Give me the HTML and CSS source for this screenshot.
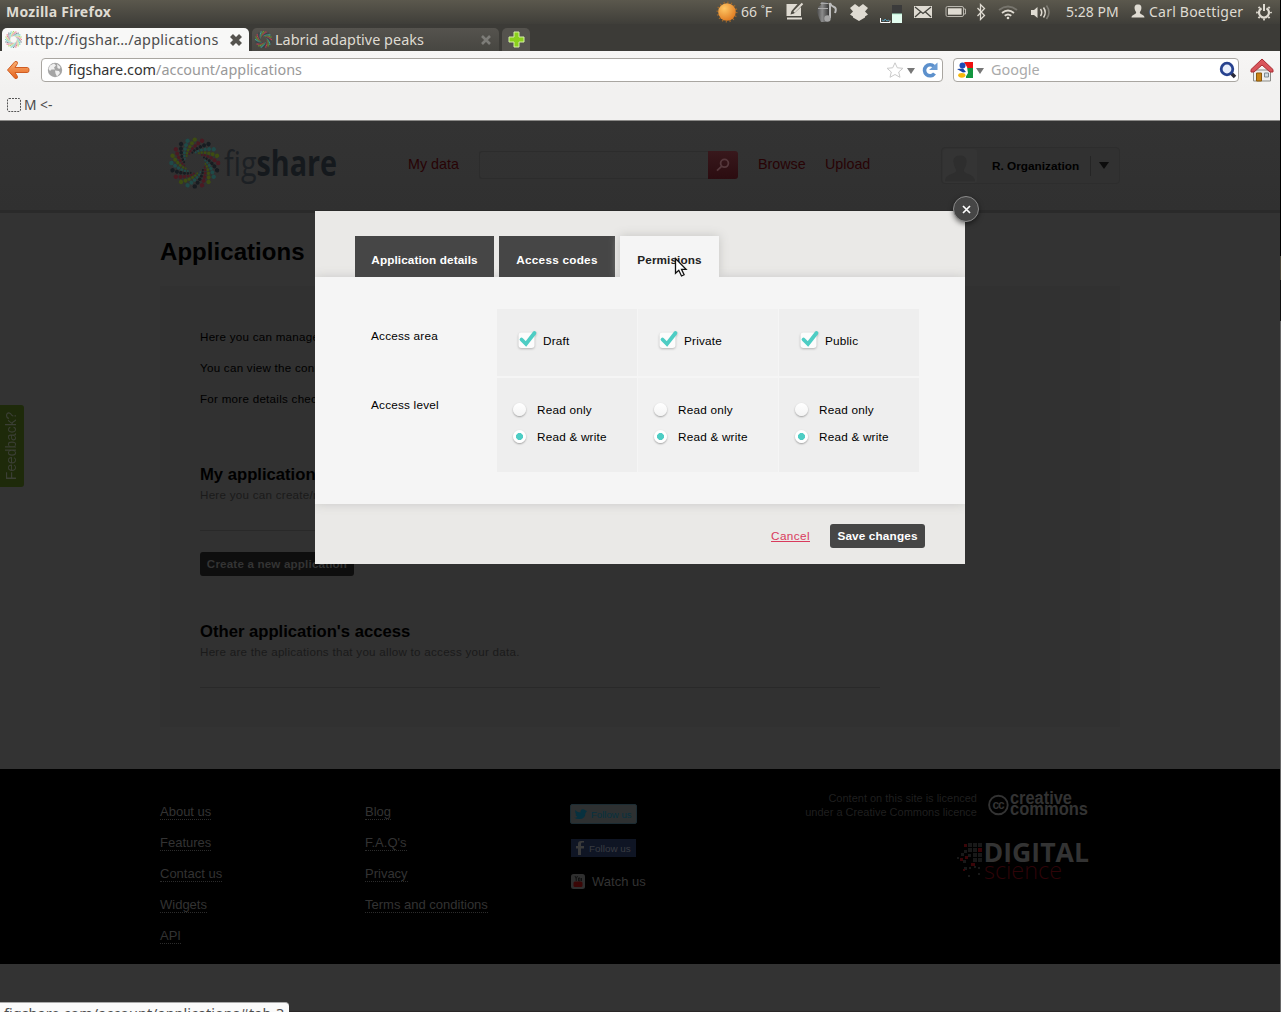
FILE: index.html
```html
<!DOCTYPE html>
<html lang="en">
<head>
<meta charset="utf-8">
<title>Applications</title>
<link rel="stylesheet" href="styles.css">
</head>
<body>
<svg class="defs" width="0" height="0">
  <defs>
    <g id="arm">
      <circle cx="0" cy="-23.4" r="2.2"/><circle cx="-2.8" cy="-19.7" r="2"/><circle cx="-4.9" cy="-16.3" r="1.75"/><circle cx="-6.6" cy="-13" r="1.5"/><circle cx="-7.7" cy="-9.8" r="1.25"/><circle cx="-8.1" cy="-7" r="1"/>
    </g>
    <g id="quad">
      <use href="#arm" class="c-green"/><use href="#arm" class="c-red" transform="rotate(18)"/><use href="#arm" class="c-navy" transform="rotate(36)"/><use href="#arm" class="c-teal" transform="rotate(54)"/>
    </g>
    <g id="swirl">
      <use href="#quad"/><use href="#quad" transform="rotate(72)"/><use href="#quad" transform="rotate(144)"/><use href="#quad" transform="rotate(216)"/><use href="#quad" transform="rotate(288)"/>
    </g>
    <linearGradient id="orange" x1="0" y1="0" x2="0" y2="1"><stop offset="0" stop-color="#fbb072"/><stop offset="1" stop-color="#e4601a"/></linearGradient>
    <radialGradient id="sun" cx=".35" cy=".3" r=".8"><stop offset="0" stop-color="#ffc765"/><stop offset="1" stop-color="#dd751c"/></radialGradient>
    <linearGradient id="metal" x1="0" y1="0" x2="1" y2="0"><stop offset="0" stop-color="#4a4a4a"/><stop offset=".4" stop-color="#8c8c8c"/><stop offset="1" stop-color="#2c2c2c"/></linearGradient>
  </defs>
</svg>
<div class="screen">
  <div class="panel">
    <span class="panel-title">Mozilla Firefox</span>
    <div class="tray">
      <svg width="22" height="24" viewBox="0 0 22 24"><circle cx="11" cy="12" r="9.6" fill="none" stroke="#a0692b" stroke-width="1.8" stroke-dasharray="1.2 2.57"/><circle cx="11" cy="12" r="8.8" fill="url(#sun)"/></svg>
      <span class="t-temp">66 ˚F</span>
      <svg width="20" height="24" viewBox="0 0 20 24"><path d="M1.500 4h11l-6 7-1 3.500 3.500-1 7-6.500v9h-14.500z" fill="#dfdbd2"/><path d="M17.500 3.500L9 12" stroke="#dfdbd2" stroke-width="2" fill="none"/><path d="M2 18.500h15" stroke="#dfdbd2" stroke-width="2"/></svg>
      <svg width="22" height="24" viewBox="0 0 22 24"><path d="M5 2h7v3l2 1v12l-2 4H5l-2-4-2-6 1-5 3-2z" fill="url(#metal)"/><path d="M2 8.500h10M4.500 3.500h8" stroke="#aaa"/><path d="M14 18V3q1 3 4 4t1 6" fill="none" stroke="#bdbdbd" stroke-width="2"/><circle cx="11.500" cy="18.500" r="3.200" fill="#a5a5a5"/></svg>
      <svg width="20" height="24" viewBox="0 0 20 24"><path d="M6 4l4 3 4-3 5 4-3 3.500 3 3-3 2v1l-6 3.500-6-3.500v-1l-3-2 3-3L1 8z" fill="#dfdbd2"/></svg>
      <svg width="24" height="24" viewBox="0 0 24 24"><path d="M.5 18v4.500H10v-2" stroke="#fff" fill="none"/><path d="M2 20l2 1 1-2 2 2 2-1" stroke="#579bb5" fill="none"/><path d="M12 5h10v9H12z" fill="#3b3b3b"/><path d="M12 14h10v9H12z" fill="#e3fdf0"/><path d="M12 14h10" stroke="#b5f0d2"/></svg>
      <svg width="20" height="24" viewBox="0 0 20 24"><rect x="1" y="6" width="18" height="12" fill="#dfdbd2"/><path d="M2 7l8 6.500L18 7M2 17l5.500-5M18 17l-5.500-5" stroke="#44433d" fill="none" stroke-width="1.300"/></svg>
      <svg width="22" height="24" viewBox="0 0 22 24"><rect x="1" y="6.500" width="17.500" height="10" rx="1.500" fill="none" stroke="#b9b6ae"/><rect x="3" y="8.300" width="13.600" height="6.400" fill="#dfdbd2"/><path d="M19 9h1.500v5H19" stroke="#b9b6ae" fill="none"/></svg>
      <svg width="12" height="24" viewBox="0 0 12 24"><path d="M1.500 8l7 7.500-4 4V4.500l4 4-7 7.500" fill="none" stroke="#dfdbd2" stroke-width="1.300"/></svg>
      <svg width="21" height="24" viewBox="0 0 21 24" fill="none" stroke-width="1.800"><path d="M1 10q9-7 18 0" stroke="#77756d"/><path d="M4 13q6-5 12 0M6.700 15.800q3.300-2.600 6.600 0" stroke="#dfdbd2"/><circle cx="10" cy="18" r="1.300" fill="#dfdbd2"/></svg>
      <svg width="22" height="24" viewBox="0 0 22 24" fill="none" stroke-width="1.500"><path d="M1 10h3l3.500-3v11L4 15H1z" fill="#dfdbd2"/><path d="M10.500 9q2.500 3.500 0 7M13.500 7.500q3.500 5 0 10" stroke="#dfdbd2"/><path d="M16.500 5.500q5 7 0 13.500" stroke="#807e76"/></svg>
      <span class="t-time">5:28 PM</span>
      <svg width="14" height="24" viewBox="0 0 14 24"><path d="M7 4.500c3 0 3.800 2 3.300 4.500-.3 1.700-1.200 2.700-1.500 3.500.2 2 4.700 2 4.700 5H.5c0-3 4.500-3 4.700-5C4.900 11.700 4 10.700 3.700 9 3.200 6.500 4 4.500 7 4.500z" fill="#dfdbd2"/></svg>
      <span class="t-user">Carl Boettiger</span>
      <svg width="17" height="24" viewBox="0 0 17 24" fill="none" stroke="#dfdbd2"><path d="M5.500 8.200a5 5 0 1 0 5 0" stroke-width="2.200"/><path d="M8 4v7" stroke-width="2"/><circle cx="8" cy="12.500" r="7" stroke-width="1.800" stroke-dasharray="1.800 3.698" stroke-dashoffset="1"/></svg>
    </div>
  </div>

  <div class="tabstrip">
    <div class="tab tab-on">
      <svg class="bright" width="17" height="17" viewBox="-25.500 -25.500 51 51"><use href="#swirl"/></svg>
      <span class="tt1">http://figshar…/applications</span>
      <svg class="tab-x" width="14" height="14" viewBox="0 0 14 14"><path d="M2.500 2.500l9 9M11.500 2.500l-9 9" stroke="#55534e" stroke-width="4.200"/></svg>
    </div>
    <div class="tab tab-off">
      <svg class="mid" width="17" height="17" viewBox="-25.500 -25.500 51 51"><use href="#swirl"/></svg>
      <span class="tt2">Labrid adaptive peaks</span>
      <svg class="tab-x" width="14" height="14" viewBox="0 0 14 14"><path d="M3 3l8 8M11 3l-8 8" stroke="#7d7c78" stroke-width="2.600"/></svg>
    </div>
    <div class="tab-new"><svg width="17" height="17" viewBox="0 0 17 17"><path d="M6 1h5v5h5v5h-5v5H6v-5H1V6h5z" fill="#8bd01c" stroke="#d7f0a6"/></svg></div>
  </div>

  <div class="navbar">
    <svg class="back" width="24" height="20" viewBox="0 0 24 20"><path d="M1.500 10L9 1.500q3-.5 2.500 2L9 7.500h12.500q1.500 0 1.500 2.500t-1.500 2.500H9l2.500 4q.5 2.500-2.500 2z" fill="url(#orange)" stroke="#cf5c22"/></svg>
    <div class="urlbar">
      <svg width="16" height="16" viewBox="0 0 16 16"><circle cx="8" cy="8" r="7.200" fill="#a5a5a5"/><path d="M3 3.500l4-2 2 2-2 2 1 2H4.500L3 9 1.500 7zM10 2l3.500 3-1 2-2-1zM8 8.500l4 .5 1 2-3 3.500-1.500-3z" fill="#f0f0f0"/></svg>
      <span class="url"><b>figshare.com</b>/account/applications</span>
      <svg class="star" width="18" height="16" viewBox="0 0 18 16"><path d="M9 .8l2.300 5 5.600.5-4.200 3.700 1.300 5.300L9 12.500l-5 2.800L5.300 10 1.100 6.300l5.600-.5z" fill="#fff" stroke="#c9c9c9"/></svg>
      <svg class="caret" width="8" height="6" viewBox="0 0 8 6"><path d="M0 0h8L4 6z" fill="#777"/></svg>
      <svg width="17" height="17" viewBox="0 0 17 17"><path d="M13 4.500A5.500 5.500 0 1 0 13.500 11.500" fill="none" stroke="#5c90cc" stroke-width="3.600"/><path d="M8 8h8.500V.5z" fill="#6c9dd4"/></svg>
    </div>
    <div class="searchbar">
      <svg width="16" height="16" viewBox="0 0 16 16"><path d="M7 0h9v6H7z" fill="#e11"/><path d="M8 6h8v10H9z" fill="#12963f"/><path d="M0 0h7l3 5 1 6-3 5H0z" fill="#fff"/><circle cx="5.500" cy="3.500" r="3" fill="#1d4ab5"/><path d="M0 7l6-.5 3 3.500-3 .5z" fill="#1743a5"/><ellipse cx="4.800" cy="13.300" rx="3.600" ry="2.400" fill="#f6b80c"/></svg>
      <svg class="caret" width="8" height="6" viewBox="0 0 8 6"><path d="M0 0h8L4 6z" fill="#777"/></svg>
      <span class="ph">Google</span>
      <svg width="18" height="18" viewBox="0 0 18 18"><path d="M12 12l4 4" stroke="#2a2a38" stroke-width="3.600"/><circle cx="8" cy="8" r="5.800" fill="#e8eefb" stroke="#27428f" stroke-width="2.800"/></svg>
    </div>
    <svg class="home" width="24" height="24" viewBox="0 0 24 24"><path d="M3.500 12h17v11h-17z" fill="#eee" stroke="#8b8b86"/><path d="M6.500 15h5v8h-5z" fill="#c98314" stroke="#8c5a0c"/><path d="M14.500 15h4v4h-4z" fill="#cfdbe3" stroke="#7e8a90"/><path d="M12 1L1 11.500V14h3l8-7 8 7h3v-2.500z" fill="#d9545a" stroke="#a92d33"/></svg>
  </div>

  <div class="bookmarks">
    <svg width="14" height="14" viewBox="0 0 14 14"><rect x=".5" y=".5" width="13" height="13" rx="1.500" fill="none" stroke="#555" stroke-dasharray="2 1"/></svg>
    <span>M &lt;-</span>
  </div>

  <div class="page">
    <header class="site-head">
      <svg class="logo dim" width="180" height="56" viewBox="0 0 180 56">
        <g transform="translate(34.800 28)"><use href="#swirl"/></g>
        <text class="lg" x="64" y="41" textLength="113" lengthAdjust="spacingAndGlyphs">fig<tspan>share</tspan></text>
      </svg>
      <a class="nav n1">My data</a>
      <div class="search"><i></i><span><svg width="14" height="14" viewBox="0 0 14 14" fill="none" stroke="#55383c" stroke-width="1.800"><circle cx="8.500" cy="5.300" r="3.900"/><path d="M5.800 8.200L1 12.600"/></svg></span></div>
      <a class="nav n2">Browse</a>
      <a class="nav n3">Upload</a>
      <div class="user">
        <svg width="34" height="34" viewBox="0 0 34 34"><rect width="34" height="34" rx="3" fill="#343434"/><path d="M17 6.500c5 0 7 3 6.500 7s-2 6-2.800 8c.3 4 11.300 3 11.300 11H2c0-8 11-7 11.300-11-.8-2-2.300-4-2.800-8s1.500-7 6.500-7z" fill="#2e2e2e"/></svg>
        <b>R. Organization</b>
        <span><svg width="10" height="7" viewBox="0 0 10 7"><path d="M0 0h10L5 7z" fill="#0c0c0c"/></svg></span>
      </div>
    </header>
    <main>
      <h1>Applications</h1>
      <section class="card">
        <p>Here you can manage your applications.</p>
        <p>You can view the connected ones.</p>
        <p>For more details check the docs.</p>
        <h2 class="h-my">My applications</h2>
        <div class="sub">Here you can create/remove applications.</div>
        <hr>
        <a class="create">Create a new application</a>
        <h2 class="h-other">Other application's access</h2>
        <div class="sub">Here are the aplications that you allow to access your data.</div>
        <hr>
      </section>
    </main>
    <footer>
      <ul><li><a>About us</a></li><li><a>Features</a></li><li><a>Contact us</a></li><li><a>Widgets</a></li><li><a>API</a></li></ul>
      <ul><li><a>Blog</a></li><li><a>F.A.Q's</a></li><li><a>Privacy</a></li><li><a>Terms and conditions</a></li></ul>
      <div class="social">
        <div class="tw"><svg width="13" height="11" viewBox="0 0 13 11"><path d="M0 8.500q2 .5 3.500-.8Q1.500 7 1.500 5.500l1 0Q.8 4 1.200 1 3.500 3.500 6.500 3.500 6.500 0 9 .3q1.500 0 2 1L13 2l-1.500 2Q11 10 5.500 10 2 10 0 8.500z" fill="#07313f"/></svg>Follow us</div>
        <div class="fb"><svg width="8" height="14" viewBox="0 0 8 14"><path d="M8 1.500H6Q5 1.500 5 3v2h3v2.500H5V14H2V7.500H0V5h2V3Q2 0 5 0h3z" fill="#3a3a3a"/></svg>Follow us</div>
        <div class="yt"><svg width="14" height="15" viewBox="0 0 14 15"><rect width="14" height="15" rx="2.500" fill="#2f2f2f"/><path d="M4 2l1.200 2.500V7M6.500 2L5.200 4.500M7.500 4v3h1.500V4zM10.500 4v3" stroke="#111" fill="none"/><rect x="2.500" y="7.500" width="9" height="5.500" rx="1.500" fill="#3a0606"/></svg>Watch us</div>
      </div>
      <div class="credits">
        <div class="cc">
          <p>Content on this site is licenced<br>under a Creative Commons licence</p>
          <svg width="102" height="28" viewBox="0 0 102 28"><circle cx="10.400" cy="14" r="9.300" fill="none" stroke="#333" stroke-width="1.900"/><text class="cc-c" x="4.400" y="17.600" textLength="12.200">cc</text><text class="cc-t" x="22" y="12.800" textLength="62" lengthAdjust="spacingAndGlyphs">creative</text><text class="cc-t" x="22" y="24" textLength="78" lengthAdjust="spacingAndGlyphs">commons</text></svg>
        </div>
        <svg class="ds" width="134" height="42" viewBox="0 0 134 42">
          <g fill="#181818"><path d="M12 2h4v4h-4zM17 2h4v4h-4zM22 2h4v4h-4zM12 7h4v4h-4zM17 7h4v4h-4zM17 12h4v4h-4zM22 12h4v4h-4zM17 17h4v4h-4zM22 17h4v4h-4zM12 13h3v3h-3zM8 9h3v3H8zM5 12h3v3H5zM1 16h2v2H1zM7 19h3v3H7zM8 26h3v3H8zM13 26h2v2h-2zM18 25h2v2h-2zM22 26h2v2h-2zM12 34h2v2h-2zM22 32h2v2h-2z"/></g>
          <path d="M8 3h3v3H8zM22 7h4v4h-4zM4 17h3v3H4zM9 15h3v3H9zM15 22h4v3h-4zM7 28h2v2H7z" fill="#3a0508"/>
          <text class="ds-d" x="27.500" y="21" textLength="105.500" lengthAdjust="spacingAndGlyphs">DIGITAL</text>
          <text class="ds-s" x="28" y="37.500" textLength="78" lengthAdjust="spacingAndGlyphs">science</text>
        </svg>
      </div>
    </footer>
    <div class="feedback"><span>Feedback?</span></div>
  </div>

  <div class="modal">
    <div class="m-tabs"><a>Application details</a><a>Access codes</a><a class="on">Permisions</a></div>
    <div class="m-body">
      <div class="lab">Access area</div>
      <div class="cell area"><svg class="chk" width="22" height="22" viewBox="0 0 22 22"><use href="#check"/></svg>Draft</div>
      <div class="cell area alt"><svg class="chk" width="22" height="22" viewBox="0 0 22 22"><use href="#check"/></svg>Private</div>
      <div class="cell area"><svg class="chk" width="22" height="22" viewBox="0 0 22 22"><use href="#check"/></svg>Public</div>
      <div class="lab">Access level</div>
      <div class="cell level"><label><i></i>Read only</label><label><i class="sel"></i>Read &amp; write</label></div>
      <div class="cell level alt"><label><i></i>Read only</label><label><i class="sel"></i>Read &amp; write</label></div>
      <div class="cell level"><label><i></i>Read only</label><label><i class="sel"></i>Read &amp; write</label></div>
    </div>
    <div class="m-foot"><a class="cancel">Cancel</a><a class="save">Save changes</a></div>
    <div class="close"><svg width="9" height="9" viewBox="0 0 9 9"><path d="M1 1l7 7M8 1L1 8" stroke="#fff" stroke-width="1.700"/></svg></div>
  </div>
  <svg class="defs" width="0" height="0"><defs><g id="check"><rect x="1.500" y="3.500" width="16" height="15.500" rx="3" fill="#fcfcfc"/><path d="M4.500 10.500l4.500 4.500L17.500 4" fill="none" stroke="#4ecdc4" stroke-width="3.800" stroke-linecap="round"/></g></defs></svg>
  <svg class="pointer" width="16" height="22" viewBox="0 0 16 22"><path d="M1.500 1.500v14.800l3.300-3 2.700 5.700 2.600-1.200-2.600-5.400h4.600z" fill="#fff" stroke="#111" stroke-width="1.300"/></svg>
  <div class="status">figshare.com/account/applications#tab-3</div>
</div>
</body>
</html>
```
FILE: styles.css
```css
* { box-sizing: border-box; }
body {
  margin: 0;
  height: 1012px;
  overflow: hidden;
  background: linear-gradient(#000 0 256px, #4a4539 256px 280px, #111 280px 321px, #666 321px);
  font-family: "Liberation Sans", Arial, sans-serif;
}
svg { display: block; flex: none; }
.defs { position: absolute; }
.screen {
  position: relative;
  width: 1280px;
  height: 1012px;
  overflow: hidden;
  background: #333;
}

/* desktop panel */
.panel {
  display: flex;
  justify-content: space-between;
  height: 24px;
  padding: 0 7px 0 6px;
  background: linear-gradient(#5b584d, #3f3e39);
  color: #dfdbd2;
  font: 14px/24px "Noto Sans", sans-serif;
  white-space: nowrap;
}
.panel-title { font-weight: 700; letter-spacing: .25px; }
.t-user { letter-spacing: .22px; }
.tray {
  display: grid;
  grid-template-columns: 25px 44px 31px 33px 31px 33px 32px 31px 22px 32px 36px 65px 18px 107px 17px;
}

/* tabs */
.tabstrip {
  display: flex;
  gap: 3px;
  height: 27px;
  padding: 4px 0 0 2px;
  background: #3c3b37;
  font: 14.4px/23px "Noto Sans", sans-serif;
  white-space: nowrap;
}
.tab {
  display: flex;
  align-items: center;
  width: 247px;
  padding: 0 6px 0 3px;
  border-radius: 5px 5px 0 0;
}
.tab span { margin-left: 3px; }
.tt1 { letter-spacing: .27px; }
.tt2 { letter-spacing: .03px; }
.tab-x { margin-left: auto; }
.tab-on { background: #f8f8f7; color: #4c4c4c; }
.tab-off { background: linear-gradient(#55534e, #474641); color: #dfdbd2; }
.tab-new {
  display: flex;
  align-items: center;
  justify-content: center;
  width: 28px;
  border-radius: 5px 5px 0 0;
  background: #55534e;
}
.bright { --g: #b5d76b; --r: #e87c8c; --n: #7b8a96; --t: #6fd0c8; }
.mid { --g: #6f9b2b; --r: #c43c51; --n: #33414d; --t: #37a89f; }
.dim { --g: #3d4c12; --r: #4a1a22; --n: #171c21; --t: #1f4a48; }
.c-green { fill: var(--g); }
.c-red { fill: var(--r); }
.c-navy { fill: var(--n); }
.c-teal { fill: var(--t); }

/* navigation */
.navbar {
  display: flex;
  align-items: center;
  height: 38px;
  padding: 0 6px;
  background: linear-gradient(#f7f6f5, #f2f1f0);
  font: 14.400px/22px "Noto Sans", sans-serif;
  white-space: nowrap;
}
.urlbar, .searchbar {
  display: flex;
  align-items: center;
  height: 24px;
  border: 1px solid #a9a6a1;
  border-radius: 4px;
  background: #fff;
}
.urlbar { width: 902px; margin-left: 11px; padding: 0 4px 0 5px; }
.url { margin-left: 5px; color: #999; }
.url b { font-weight: 400; color: #333; }
.star { margin-left: auto; }
.caret { margin: 2px 7px 0 3px; }
.star + .caret { margin: 2px 6px 0 3px; }
.searchbar { width: 286px; margin: 0 11px 0 10px; padding: 0 0 0 3px; }
.searchbar > :last-child { margin: 0 1px 0 auto; }
.ph { color: #aaa; }
.bookmarks {
  display: flex;
  align-items: center;
  gap: 3px;
  height: 32px;
  padding: 0 7px;
  background: #f2f1f0;
  border-bottom: 1px solid #8b8a88;
  color: #4c4c4c;
  font: 13.8px/30px "Noto Sans", sans-serif;
}

/* web page */
.page { position: relative; height: 891px; color: #000; border-bottom: 1px solid #2a2727; }
.site-head {
  display: flex;
  align-items: flex-start;
  height: 92px;
  padding: 0 160px;
  border-bottom: 3px solid #2a2a2a;
  background: linear-gradient(#333, #303030);
}
.logo { margin: 14px 0 0; }
.lg { font: 35px "Open Sans", sans-serif; fill: #1c2024; }
.lg tspan { font-weight: 700; fill: #15191d; }
.nav { margin-top: 33px; color: #280305; font-size: 14.300px; line-height: 20px; white-space: nowrap; }
.n1 { width: 71px; margin-left: 68px; }
.n2 { width: 67px; margin-left: 20px; }
.n3 { width: 46px; }
.search { display: flex; width: 259px; height: 28px; margin-top: 30px; }
.search i { flex: 1; border: 1px solid #2c2c2c; border-right: 0; border-radius: 3px 0 0 3px; }
.search span {
  display: flex;
  align-items: center;
  justify-content: center;
  width: 30px;
  border-radius: 0 3px 3px 0;
  background: linear-gradient(#38181c, #2b0c10);
}
.user {
  display: flex;
  align-items: center;
  width: 179px;
  height: 37px;
  margin: 26px 0 0 auto;
  padding: 1px;
  border: 1px solid #2d2d2d;
  border-radius: 4px;
  background: #313131;
}
.user b { margin-left: 15px; font-size: 11.8px; white-space: nowrap; }
.user span { display: flex; align-items: center; margin-left: auto; height: 20px; padding: 0 9px 0 8px; border-left: 1px solid #252525; }
main { height: 556px; padding: 23px 160px 0; }
h1 { margin: 0; font-size: 24px; line-height: 32px; letter-spacing: .05px; }
.card {
  width: 960px;
  height: 441px;
  margin-top: 18px;
  padding: 35px 40px 0;
  background: #313131;
}
.card p { margin: 0; height: 31px; font-size: 11.6px; line-height: 31px; letter-spacing: .27px; }
h2 { margin: 0; font-size: 16.65px; line-height: 24px; }
.h-my { margin-top: 49px; }
.sub { margin-top: -1px; font-size: 11.6px; line-height: 18px; letter-spacing: .27px; color: #1a1a1a; }
hr { width: 680px; height: 1px; margin: 26px 0 0; border: 0; background: #292929; }
.create {
  display: block;
  width: 154px;
  height: 24px;
  margin-top: 21px;
  border-radius: 3px;
  background: #0e0e0e;
  color: #343434;
  font: 700 11.6px/24px "Liberation Sans", sans-serif;
  letter-spacing: .18px;
  text-align: center;
}
.h-other { margin-top: 44px; }
footer {
  display: flex;
  height: 195px;
  padding: 0 160px;
  background: #000;
  color: #333;
  font-size: 13px;
}
footer ul { width: 205px; margin: 27px 0 0; padding: 0; list-style: none; }
footer li { height: 31px; line-height: 31px; }
footer li a { border-bottom: 1px dotted #2c2c2c; }
.social { width: 100px; padding-top: 35px; }
.social div { display: flex; align-items: center; }
.tw { width: 67px; height: 20px; padding-left: 3px; gap: 4px; background: #2d3031; color: #07313f; font-size: 9.6px; border-radius: 2px; border: 1px solid #1c2c33; }
.fb { width: 65px; height: 18px; margin: 15px 0 0 1px; padding-left: 5px; gap: 5px; background: #0f1524; color: #3a3c42; font-size: 9.9px; }
.yt { gap: 7px; margin: 17px 0 0 1px; height: 15px; }
.credits { display: flex; flex-direction: column; align-items: flex-end; margin-left: auto; padding: 22px 30px 0 0; }
.cc { display: flex; gap: 11px; }
.cc p { margin: 1px 0 0; font-size: 11px; line-height: 13.7px; text-align: right; color: #1f1f1f; }
.cc-c { font: 700 12px "Liberation Sans", sans-serif; fill: #333; }
.cc-t { font: 700 17.5px "Liberation Sans", sans-serif; fill: #333; }
.ds { margin-top: 22px; }
.ds-d { font: 700 26.5px "Open Sans", sans-serif; fill: #333; }
.ds-s { font: 300 23.500px "Open Sans", sans-serif; fill: #2e0408; }
.feedback {
  position: absolute;
  left: 0;
  top: 284px;
  width: 24px;
  height: 82px;
  border-radius: 0 3px 3px 0;
  background: #1e2a0a;
  color: #3b3f35;
}
.feedback span {
  display: block;
  width: 24px;
  height: 82px;
  writing-mode: vertical-rl;
  transform: rotate(180deg);
  font-size: 13.800px;
  line-height: 24px;
  text-align: center;
}

/* dialog */
.modal {
  position: absolute;
  left: 315px;
  top: 211px;
  width: 650px;
  height: 353px;
  background: #eae9e7;
  font-size: 11.75px;
  letter-spacing: .21px;
}
.m-tabs { position: relative; z-index: 1; display: flex; gap: 5px; height: 66px; padding: 25px 0 0 40px; letter-spacing: .1px; }
.m-tabs a {
  height: 41px;
  padding-top: 3px;
  width: 139px;
  background: #464646;
  color: #fff;
  font-weight: 700;
  line-height: 41px;
  text-align: center;
}
.m-tabs a:nth-child(2) { width: 116px; letter-spacing: .25px; }
.m-tabs .on {
  width: 99px;
  background: #f5f5f5;
  color: #222;
  box-shadow: 0 0 10px #c4c4c2;
  clip-path: inset(-12px -12px 0 -12px);
}
.m-body {
  display: grid;
  grid-template-columns: 125px 140px 140px 140px;
  grid-template-rows: 67px 94px;
  column-gap: 1px;
  row-gap: 2px;
  height: 227px;
  padding: 32px 0 0 56px;
  background: #f5f5f5;
  box-shadow: 0 0 10px #c8c8c6;
  clip-path: inset(-12px 0);
}
.m-body .lab { line-height: 18px; padding-top: 18px; }
.cell { background: #eee; }
.cell.alt { background: #f1f1f1; }
.area { display: flex; align-items: center; padding: 0 0 5px 20px; gap: 4px; }
.chk { filter: drop-shadow(0 1px 1px rgba(0, 0, 0, .25)); }
.level { padding-top: 18px; }
.level label { display: flex; align-items: center; height: 27px; padding-left: 16px; gap: 11px; }
.level i {
  display: flex;
  width: 13px;
  height: 13px;
  border-radius: 50%;
  background: linear-gradient(#fff, #f4f4f4);
  box-shadow: 0 1px 2px rgba(0, 0, 0, .35);
}
.level .sel { background: radial-gradient(circle, #4ecdc4 0 3.200px, #fff 3.800px); }
.m-foot { display: flex; justify-content: flex-end; gap: 20px; padding: 20px 40px 0 0; line-height: 24px; }
.cancel { color: #d93a5c; letter-spacing: .4px; text-decoration: underline; }
.save { width: 95px; height: 24px; border-radius: 3px; background: #464646; color: #fff; font-weight: 700; letter-spacing: .15px; text-align: center; }
.close {
  position: absolute;
  left: 638px;
  top: -15px;
  display: flex;
  align-items: center;
  justify-content: center;
  width: 26px;
  height: 26px;
  border: 1px solid #8c8c8c;
  border-radius: 50%;
  background: #464646;
  box-shadow: 0 2px 5px rgba(0, 0, 0, .5);
  z-index: 2;
}
.pointer { position: absolute; z-index: 3; left: 674px; top: 257px; }
.status {
  position: absolute;
  left: 0;
  top: 1002px;
  width: 289px;
  height: 24px;
  padding-left: 4px;
  border-top: 1px solid #aaa;
  border-radius: 0 4px 0 0;
  background: #fafafa;
  color: #4c4c4c;
  font: 14.5px/20px "Noto Sans", sans-serif;
  white-space: nowrap;
}
```
